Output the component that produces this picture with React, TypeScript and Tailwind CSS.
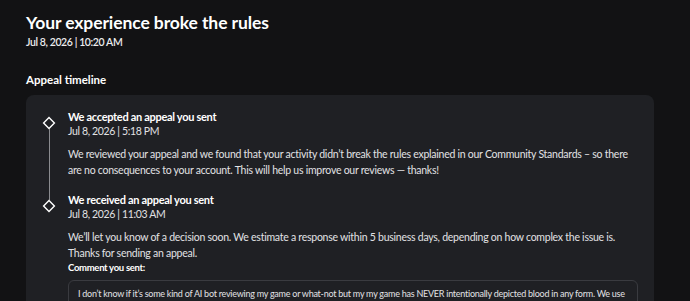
import React from 'react';

const font = { fontFamily: 'Lato, "Noto Sans", sans-serif' };

interface Event {
  title: string;
  date: string;
  body: string;
  comment?: string;
}

const events: Event[] = [
  {
    title: 'We accepted an appeal you sent',
    date: 'Jul 8, 2026 | 5:18 PM',
    body: 'We reviewed your appeal and we found that your activity didn\u2019t break the rules explained in our Community Standards \u2013 so there are no consequences to your account. This will help us improve our reviews \u2014 thanks!',
  },
  {
    title: 'We received an appeal you sent',
    date: 'Jul 8, 2026 | 11:03 AM',
    body: 'We\u2019ll let you know of a decision soon. We estimate a response within 5 business days, depending on how complex the issue is. Thanks for sending an appeal.',
    comment:
      'I don\u2019t know if it\u2019s some kind of AI bot reviewing my game or what-not but my my game has NEVER intentionally depicted blood in any form. We use blood-free effects only.',
  },
];

const Diamond = () => (
  <svg width="14" height="14" viewBox="0 0 14 14" className="block">
    <path d="M7 1.6 L12.4 7 L7 12.4 L1.6 7 Z" fill="#1f2024" stroke="#ffffff" strokeWidth="1.4" />
  </svg>
);

export default function App() {
  return (
    <div className="w-[690px] h-[301px] overflow-hidden bg-[#121214] text-white" style={font}>
      <div className="pl-[26px] pr-[36px] pt-[12px]">
        <h1 className="text-[17.5px] leading-[22px] font-bold tracking-[-0.1px]">Your experience broke the rules</h1>
        <p className="text-[10.5px] leading-[14px] font-semibold mt-[1px] tracking-[-0.4px] text-[#ececee]">Jul 8, 2026 | 10:20 AM</p>
        <h2 className="text-[11.5px] leading-[16px] font-bold mt-[23px]">Appeal timeline</h2>

        <div className="mt-[7px] bg-[#1f2024] rounded-[8px] pt-[15px] pb-4 pl-[16px] pr-[16px]">
          {events.map((ev, i) => (
            <div key={i} className="flex">
              <div className="relative w-[14px] shrink-0">
                <div className="pt-[6px]">
                  <Diamond />
                </div>
                {i < events.length - 1 && (
                  <div className="absolute left-[6.5px] top-[19px] bottom-[-7px] w-px bg-[#8a8b8f]" />
                )}
              </div>
              <div className={'flex-1 ml-[12px] ' + (i < events.length - 1 ? 'pb-[15px]' : '')}>
                <p className="text-[11px] leading-[14px] font-bold tracking-[-0.3px]">{ev.title}</p>
                <p className="text-[10.5px] leading-[14px] tracking-[-0.35px] text-[#e2e2e4]">{ev.date}</p>
                <p className="text-[10.5px] leading-[16px] tracking-[-0.25px] text-[#e2e2e4] mt-[8px]">{ev.body}</p>
                {ev.comment && (
                  <>
                    <p className="text-[9.5px] leading-[12px] font-bold tracking-[-0.3px] mt-[1px]">Comment you sent:</p>
                    <div className="mt-[6px] border border-[#3a3b40] rounded-[6px] bg-[#1f2024] px-[9px] pt-[6px] pb-2">
                      <p className="text-[9px] leading-[14px] tracking-[-0.25px] text-[#e2e2e4]">{ev.comment}</p>
                    </div>
                  </>
                )}
              </div>
            </div>
          ))}
        </div>
      </div>
    </div>
  );
}
